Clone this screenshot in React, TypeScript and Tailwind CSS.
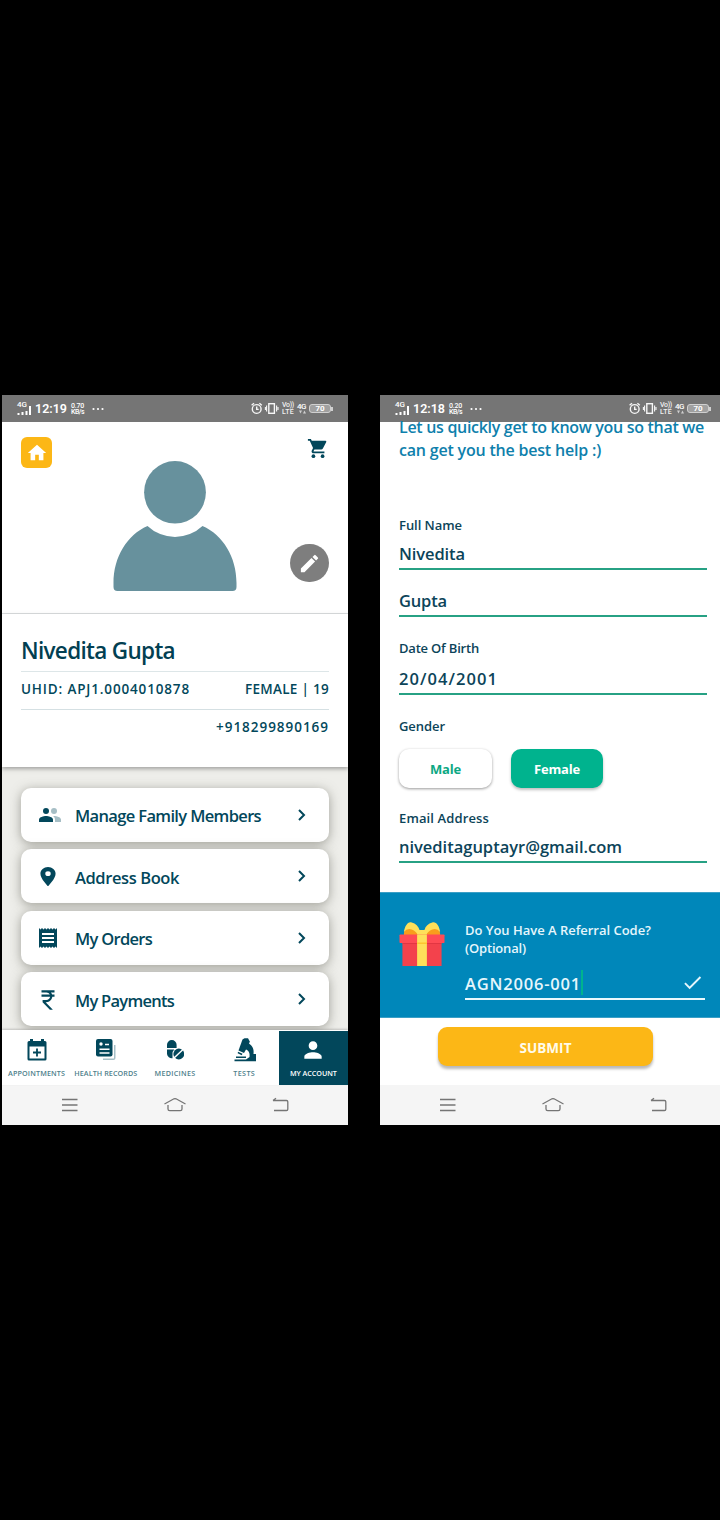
import { useLayoutEffect, useRef, useState } from "react";
import type { ReactNode } from "react";
import { MdEdit, MdHome, MdReceipt, MdPerson, MdCurrencyRupee, MdCheck } from "react-icons/md";

/* Text whose tracking is tuned so that it spans the given width. */
function Fit({ w, className = "", children }: { w: number; className?: string; children: string }) {
  const ref = useRef<HTMLSpanElement>(null);
  const [spacing, setSpacing] = useState(0);
  useLayoutEffect(() => {
    const el = ref.current;
    if (!el) return;
    const natural = el.getBoundingClientRect().width;
    setSpacing((w - natural) / children.length);
  }, [w, children]);
  return (
    <span ref={ref} className={"inline-block whitespace-nowrap " + className} style={{ letterSpacing: `${spacing}px` }}>
      {children}
    </span>
  );
}

function StatusBar({ time, rate }: { time: string; rate: string }) {
  return (
    <div className="flex h-[27px] w-[346px] shrink-0 items-center bg-[#757575] pl-[15px] font-[Roboto,sans-serif] text-white">
      <div className="flex h-[13px] w-[15px] flex-col items-start">
        <span className="h-[6px] text-[8px] leading-[6px] font-medium">4G</span>
        <svg className="-mt-[2px] h-[9px] w-[15px]" viewBox="0 0 15 9" fill="#fff">
          <rect x="0.5" y="7" width="2" height="2" />
          <rect x="4.5" y="6" width="2" height="3" />
          <rect x="8.5" y="5" width="2" height="4" />
          <rect x="12" y="0" width="2" height="9" />
        </svg>
      </div>
      <div className="ml-[3px] flex w-[36px] pt-[1px] text-[12.500px] leading-none font-semibold">
        <Fit w={32}>{time}</Fit>
      </div>
      <div className="flex w-[21px] flex-col items-start text-[7px] leading-[6px] font-medium">
        <Fit w={13}>{rate}</Fit>
        <Fit w={13}>KB/s</Fit>
      </div>
      <svg className="h-[4px] w-[12px]" viewBox="0 0 12 4" fill="#fff">
        <circle cx="1.500" cy="2" r="1.100" />
        <circle cx="6" cy="2" r="1.100" />
        <circle cx="10.500" cy="2" r="1.100" />
      </svg>
      <svg className="ml-[147px] h-[13px] w-[28px]" viewBox="0 0 28 13" fill="none" stroke="#f6f6f6" strokeWidth="1.400">
        <circle cx="5.700" cy="7" r="4.400" />
        <path d="M5.700 4.500v2.900h2M.6 3.200 3 1.200M10.800 3.200 8.400 1.200" />
        <rect x="17.800" y="1.700" width="5.600" height="9.600" />
        <path d="M15.600 3.500v6M14.400 5v3M25.600 3.500v6M27 5v3" strokeWidth="1.100" />
      </svg>
      <div className="ml-[3px] flex w-[15px] flex-col items-start text-[7px] leading-[6.500px] font-medium text-[#f0f0f0]">
        <Fit w={12}>Vo))</Fit>
        <Fit w={12}>LTE</Fit>
      </div>
      <div className="flex w-[12px] flex-col items-start text-[8px] leading-[7px] font-medium">
        <Fit w={9}>4G</Fit>
        <svg className="ml-[2px] h-[4px] w-[7px]" viewBox="0 0 7 4" fill="#d0d0d0">
          <path d="M0 .5h3L1.500 3.500zM4 3.500h3L5.500.5z" />
        </svg>
      </div>
      <div className="flex h-[9px] w-[22px] items-center justify-center rounded-[3px] border border-[#d0d0d0] bg-[#a0a0a0] text-[8px] leading-none font-bold">
        70
      </div>
      <div className="h-[4px] w-[1.500px] bg-[#d0d0d0]" />
    </div>
  );
}

function SystemNav() {
  return (
    <div className="flex h-[40px] w-[346px] shrink-0 items-center bg-[#f5f5f5]">
      <svg className="h-[40px] w-[346px]" viewBox="0 0 346 40" fill="none" stroke="#757575" strokeWidth="1.300">
        <path d="M60 14.500h15.500M60 20h15.500M60 25.500h15.500" />
        <path d="M162.500 19 172 13.800q1-.4 2 0L183.500 19" />
        <path d="M166 20v4q0 1.700 1.700 1.700h10.600q1.700 0 1.700-1.700v-4" />
        <path d="M271 15.500h13.500q1.300 0 1.300 1.300v7.400q0 1.300-1.300 1.300h-12.500M274 13.300l-3 2.200" />
      </svg>
    </div>
  );
}

function CartIcon() {
  return (
    <svg className="h-[23px] w-[22px]" viewBox="0 0 24 24" preserveAspectRatio="none" fill="#02475b">
      <circle cx="7" cy="20" r="2" />
      <circle cx="17" cy="20" r="2" />
      <path d="M1 2v2h2l3.600 7.590-1.350 2.450c-.16.28-.25.61-.25.96 0 1.100.9 2 2 2h12v-2H7.420c-.14 0-.25-.11-.25-.25l.03-.12.9-1.630h7.450c.75 0 1.410-.41 1.750-1.030l3.580-6.490A1.003 1.003 0 0 0 20 4H5.210l-.94-2H1z" />
    </svg>
  );
}

function Avatar() {
  return (
    <svg className="h-[130px] w-[124px]" viewBox="0 0 124 130" fill="#67919d">
      <ellipse cx="62" cy="31.300" rx="30.900" ry="31.300" />
      <path d="M34.500 65A40 40 0 0 0 89.500 65C110 74 123.500 96 123.500 122V126Q123.500 130 119.500 130H4.500Q.5 130 .5 126V122C.5 96 14 74 34.500 65Z" />
    </svg>
  );
}

function PeopleIcon() {
  return (
    <svg className="ml-[3px] h-[24px] w-[24px]" viewBox="0 0 24 24" fill="#02475b">
      <circle cx="8" cy="8" r="3" />
      <path d="M8 13c-2.330 0-7 1.170-7 3.500V19h14v-2.500c0-2.330-4.670-3.500-7-3.500z" />
      <g opacity=".35">
        <circle cx="16" cy="8" r="3" />
        <path d="M16 13c-.29 0-.62.02-.97.05 1.160.84 1.970 1.970 1.970 3.450V19h6v-2.500c0-2.330-4.670-3.500-7-3.500z" />
      </g>
    </svg>
  );
}

function PinIcon() {
  return (
    <svg className="h-[23px] w-[26px]" viewBox="0 0 24 24" preserveAspectRatio="none" fill="#02475b">
      <path d="M12 2C8.130 2 5 5.130 5 9c0 5.250 7 13 7 13s7-7.750 7-13c0-3.870-3.130-7-7-7zm0 9.500a2.500 2.500 0 0 1 0-5 2.500 2.500 0 0 1 0 5z" />
    </svg>
  );
}

function MenuCard({ icon, label, w }: { icon: ReactNode; label: string; w: number }) {
  return (
    <div className="flex h-[54px] shrink-0 items-center rounded-[10px] bg-white shadow-[0_2px_11px_rgba(80,80,70,0.5)]">
      <div className="flex w-[54px] items-center justify-center pt-[1px] text-[#02475b]">{icon}</div>
      <div className="grow pt-[3px] text-[16.500px] leading-[20px] font-semibold">
        <Fit w={w}>{label}</Fit>
      </div>
      <svg className="mr-[23px] h-[12px] w-[9px]" viewBox="0 0 9 12" fill="none" stroke="#02475b" strokeWidth="2">
        <path d="m2 1 5 5-5 5" />
      </svg>
    </div>
  );
}

function TabItem({ icon, label, w, active = false }: { icon: ReactNode; label: string; w: number; active?: boolean }) {
  return (
    <div
      className={
        active
          ? "flex h-[54px] flex-1 flex-col items-center bg-[#02475b] pt-[6px] text-white"
          : "flex h-[54px] flex-1 flex-col items-center pt-[6px] text-[#4f7f8c]"
      }
    >
      <div className="flex h-[25px] items-center justify-center">{icon}</div>
      <div className="mt-[6px] text-[7.200px] leading-[10px] font-semibold">
        <Fit w={w}>{label}</Fit>
      </div>
    </div>
  );
}

function CalendarIcon() {
  return (
    <svg className="h-[22px] w-[20px]" viewBox="0 0 20 22">
      <path fill="#02475b" d="M2 2h1V0h3v2h8V0h3v2h1q1.500 0 1.500 1.500V20q0 1.500-1.500 1.500H2Q.5 21.500.5 20V3.500Q.5 2 2 2z" />
      <path fill="#fff" d="M2.500 7.500h15v12h-15z" />
      <path stroke="#02475b" strokeWidth="1.800" d="M10 9.500v8M6 13.500h8" />
    </svg>
  );
}

function RecordsIcon() {
  return (
    <svg className="h-[22px] w-[20px]" viewBox="0 0 20 22">
      <path fill="#a7c0c8" d="M18 6h1.500v13q0 2-2 2H7v-1.500h11z" />
      <rect x="0" y="0" width="16.500" height="17.500" rx="2" fill="#02475b" />
      <circle cx="5" cy="5" r="1.700" fill="#fff" />
      <path stroke="#fff" strokeWidth="1.500" d="M9 5.500h4M3.500 10.300h10M3.500 14h10" />
    </svg>
  );
}

function PillsIcon() {
  return (
    <svg className="h-[20px] w-[17px]" viewBox="0 0 17 20">
      <path fill="#02475b" d="M0 8V4.800a4.800 4.800 0 0 1 9.600 0V8zM0 9.500h7.200A6 6 0 0 0 5.500 14v4.200A4.800 4.800 0 0 1 0 14z" />
      <circle cx="11.800" cy="14" r="5.400" fill="#02475b" />
      <path stroke="#fff" strokeWidth="1.500" d="m7 18 9-8.500" />
    </svg>
  );
}

function MicroscopeIcon() {
  return (
    <svg className="ml-[2px] h-[24px] w-[24px]" viewBox="0 0 24 24" fill="#02475b">
      <path d="m9.500 1.500 2-1.300h3.500l1.800 3.300-1 3L11 15l-5.500-2.500z" />
      <path d="m5 13.700 4.500 2-.8 1.500-4-2z" />
      <path d="M15.500 5.500c4 2 5.800 6 5 10.500h2.500v7.300H1.500v-1.700H13l3.500-2.600c.5-4-.5-6.500-4-7.800z" />
      <path d="M3 18.500h10V20H3z" />
    </svg>
  );
}

function AccountScreen() {
  return (
    <section className="flex h-[730px] w-[346px] shrink-0 flex-col overflow-hidden bg-white text-[#02475b]">
      <StatusBar time="12:19" rate="0.70" />
      <div className="flex h-[192px] shrink-0 justify-between border-b border-[#dadddf] px-[19px]">
        <div className="mt-[15px] flex h-[31px] w-[31px] items-center justify-center rounded-[6px] bg-[#fcb716] text-white">
          <MdHome size={22} />
        </div>
        <div className="mt-[39px] ml-[17px] w-[124px]">
          <Avatar />
        </div>
        <div className="flex w-[48px] flex-col items-end justify-between pt-[15px] pb-[31px]">
          <CartIcon />
          <div className="flex h-[38px] w-[39px] items-center justify-center rounded-full bg-[#7e7e7e] text-white">
            <MdEdit size={23} />
          </div>
        </div>
      </div>
      <div className="z-10 h-[153px] shrink-0 bg-white px-[19px] pt-[21px] shadow-[0_2px_4px_rgba(90,90,90,0.5)]">
        <div className="h-[37px] border-b border-[#dde6e8] text-[22.500px] leading-[32px] font-semibold text-[#023f52]">
          <Fit w={154}>Nivedita Gupta</Fit>
        </div>
        <div className="flex h-[38px] justify-between border-b border-[#d5e0e3] text-[13.500px] leading-[35px] font-semibold">
          <Fit w={169}>UHID: APJ1.0004010878</Fit>
          <Fit w={84}>FEMALE | 19</Fit>
        </div>
        <div className="text-right text-[13.500px] leading-[35px] font-semibold">
          <Fit w={113}>+918299890169</Fit>
        </div>
      </div>
      <div className="flex h-[263px] shrink-0 flex-col gap-[7.500px] overflow-hidden bg-[#eeeeea] px-[19px] pt-[20.500px]">
        <MenuCard icon={<PeopleIcon />} label="Manage Family Members" w={186} />
        <MenuCard icon={<PinIcon />} label="Address Book" w={104} />
        <MenuCard icon={<MdReceipt size={24} />} label="My Orders" w={77} />
        <MenuCard icon={<MdCurrencyRupee size={26} />} label="My Payments" w={99} />
      </div>
      <div className="z-10 flex h-[55px] shrink-0 items-end bg-white shadow-[0_-1px_2px_rgba(90,90,90,0.3)]">
        <TabItem icon={<CalendarIcon />} label="APPOINTMENTS" w={57} />
        <TabItem icon={<RecordsIcon />} label="HEALTH RECORDS" w={63} />
        <TabItem icon={<PillsIcon />} label="MEDICINES" w={41} />
        <TabItem icon={<MicroscopeIcon />} label="TESTS" w={22} />
        <TabItem icon={<MdPerson size={26} />} label="MY ACCOUNT" w={47} active />
      </div>
      <SystemNav />
    </section>
  );
}

function Label({ w, children }: { w: number; children: string }) {
  return (
    <div className="h-[20px] text-[13px] leading-[20px] font-semibold">
      <Fit w={w}>{children}</Fit>
    </div>
  );
}

function Field({ w, className, children }: { w: number; className: string; children: string }) {
  return (
    <div className={"w-[308px] border-b-2 border-[#27a184] text-[16.500px] leading-[20px] font-semibold " + className}>
      <Fit w={w}>{children}</Fit>
    </div>
  );
}

function Gift() {
  return (
    <svg className="h-[45px] w-[46px] shrink-0" viewBox="0 0 47 45" preserveAspectRatio="none">
      <path fill="#f99d1c" d="M5 12q0-4 3-6l13 2h5l13-2q3 2 3 6v1H5z" />
      <path fill="#fee05a" d="M5 10C6 4 9-1 13 .5c4 1 7 4 8 7.500h5C27 4 30 1.500 34 .5c4-1 7 3 8 9.500q-3-4-8-2.500-5 2-6 5.500h-9q-1-3.500-6-5.500-5-1.500-8 2.500z" />
      <path fill="#f3424c" d="M3.500 20h40v24h-40z" />
      <path fill="#e23642" d="M3.500 20h40v2h-40z" />
      <rect x="0.500" y="12.500" width="46" height="8.500" rx="0.800" fill="#ff4b55" />
      <path fill="#fee05a" d="M18.500 12.500h10V44h-10z" />
      <path fill="#fdc62f" d="M18.500 20.500h10v1.500h-10z" />
    </svg>
  );
}

function SignUpScreen() {
  return (
    <section className="flex h-[730px] w-[340px] shrink-0 flex-col overflow-hidden bg-white text-[#0c4459]">
      <StatusBar time="12:18" rate="0.20" />
      <div className="flex h-[470px] shrink-0 flex-col pl-[19px]">
        <div className="flex flex-col items-start text-[16px] font-semibold text-[#0e80ac]">
          <div className="h-[11px] leading-[10px]">
            <Fit w={305}>Let us quickly get to know you so that we</Fit>
          </div>
          <div className="h-[29px] leading-[34px]">
            <Fit w={202}>can get you the best help :)</Fit>
          </div>
        </div>
        <div className="mt-[53px]">
          <Label w={63}>Full Name</Label>
        </div>
        <Field w={66} className="mt-[9px] h-[26px]">Nivedita</Field>
        <Field w={48} className="mt-[21px] h-[26px]">Gupta</Field>
        <div className="mt-[21px]">
          <Label w={80}>Date Of Birth</Label>
        </div>
        <Field w={99} className="mt-[11px] h-[26px]">20/04/2001</Field>
        <div className="mt-[21px]">
          <Label w={46}>Gender</Label>
        </div>
        <div className="mt-[13px] flex gap-[19px] text-[13px] font-bold">
          <div className="flex h-[39px] w-[93px] items-center justify-center rounded-[10px] bg-white pt-[2px] text-[#0da883] shadow-[0_1px_3px_rgba(0,0,0,0.4)]">
            <Fit w={31}>Male</Fit>
          </div>
          <div className="flex h-[39px] w-[92px] items-center justify-center rounded-[10px] bg-[#00b38e] pt-[2px] text-white shadow-[0_2px_3px_rgba(0,0,0,0.25)]">
            <Fit w={46}>Female</Fit>
          </div>
        </div>
        <div className="mt-[20px]">
          <Label w={90}>Email Address</Label>
        </div>
        <Field w={223} className="mt-[9px] h-[26px]">niveditaguptayr@gmail.com</Field>
      </div>
      <div className="flex h-[126px] shrink-0 border-y border-[#3b9fc6] bg-[#0087ba] pt-[29px] pl-[19px] text-[#e6f6fc]">
        <Gift />
        <div className="ml-[20px] w-[240px]">
          <div className="-mt-[1px] flex flex-col items-start text-[13px] leading-[18px] font-semibold">
            <Fit w={186}>Do You Have A Referral Code?</Fit>
            <Fit w={61}>(Optional)</Fit>
          </div>
          <div className="mt-[12px] flex h-[31px] border-b-2 border-[#eaf8fd]">
            <div className="w-[116px] text-[16.500px] leading-[30px] font-semibold">
              <Fit w={116}>AGN2006-001</Fit>
            </div>
            <div className="mt-[1px] h-[25px] w-[2px] shrink-0 bg-[#00b38e]" />
            <MdCheck size={23} className="mt-[2px] mr-[1px] ml-auto" />
          </div>
        </div>
      </div>
      <div className="h-[67px] shrink-0 pt-[9px] pl-[58px]">
        <div className="flex h-[39px] w-[215px] items-center justify-center rounded-[9px] bg-[#fcb716] pt-[3px] text-[13.500px] font-bold text-[#fffbea] shadow-[0_3px_3px_rgba(0,0,0,0.28)]">
          <Fit w={52}>SUBMIT</Fit>
        </div>
      </div>
      <SystemNav />
    </section>
  );
}

export default function App() {
  return (
    <main className="flex h-[1520px] w-[720px] gap-[32px] overflow-hidden bg-black pt-[395px] pl-[2px] font-['Open_Sans','Noto_Sans',sans-serif]">
      <AccountScreen />
      <SignUpScreen />
    </main>
  );
}
